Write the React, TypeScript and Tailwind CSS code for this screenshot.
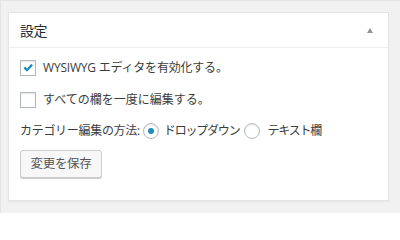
const font = { fontFamily: '"Open Sans", "Noto Sans CJK JP", sans-serif' }

function Checkbox({ checked }: { checked?: boolean }) {
  return (
    <span className="flex h-4 w-4 shrink-0 items-center justify-center border border-[#b4b9be] bg-white shadow-[inset_0_1px_2px_rgba(0,0,0,0.1)]">
      {checked && (
        <svg viewBox="0 0 16 16" className="h-4 w-4" aria-hidden="true">
          <path d="M2.8 8.3 L4.8 6.4 L6.9 8.5 L11.7 3.2 L13.6 5 L6.9 12.2 Z" fill="#1e8cbe" />
        </svg>
      )}
    </span>
  )
}

function Radio({ checked }: { checked?: boolean }) {
  return (
    <span className="flex h-4 w-4 shrink-0 items-center justify-center rounded-full border border-[#b4b9be] bg-white shadow-[inset_0_1px_2px_rgba(0,0,0,0.1)]">
      {checked && <span className="h-[6px] w-[6px] rounded-full bg-[#1e8cbe]" />}
    </span>
  )
}

export default function App() {
  return (
    <div
      style={font}
      className="h-[213px] w-[400px] overflow-hidden border-l border-t border-[#e4e4e4] bg-[#f1f1f1] pl-[7px] pt-[11px] text-[#3c3c3c]"
    >
      <div className="h-[189px] w-[381px] border border-[#e5e5e5] bg-white shadow-[0_1px_1px_rgba(0,0,0,0.04)]">
        <div className="flex h-[35px] items-center justify-between border-b border-[#eee] pl-[11px] pr-[15px]">
          <h2 className="text-[14px] tracking-[-0.6px] text-[#23282d]">設定</h2>
          <svg viewBox="0 0 6 5" className="h-[5px] w-[6px]" aria-hidden="true">
            <path d="M3 0 L6 5 L0 5 Z" fill="#8c9296" />
          </svg>
        </div>

        <div className="flex flex-col pl-[11px] pt-[12px] text-[12px]">
          <label className="flex h-4 items-center gap-[7px]">
            <Checkbox checked />
            <span className="tracking-[-0.2px]">WYSIWYG エディタを有効化する。</span>
          </label>
          <label className="mt-4 flex h-4 items-center gap-[7px]">
            <Checkbox />
            <span>すべての欄を一度に編集する。</span>
          </label>
          <div className="mt-[15px] flex h-4 items-center">
            <span className="mr-[3px] tracking-[-0.3px]">カテゴリー編集の方法:</span>
            <Radio checked />
            <span className="ml-[5px] mr-[5px] tracking-[-1.2px]">ドロップダウン</span>
            <Radio />
            <span className="ml-[7px] tracking-[-1.2px]">テキスト欄</span>
          </div>
          <div className="mt-[11px]">
            <button className="h-[28px] w-[82px] rounded-[3px] border border-[#ccc] bg-[#f7f7f7] text-[12.5px] tracking-[-0.3px] text-[#555] shadow-[0_1px_0_#ccc]">
              変更を保存
            </button>
          </div>
        </div>
      </div>
    </div>
  )
}
